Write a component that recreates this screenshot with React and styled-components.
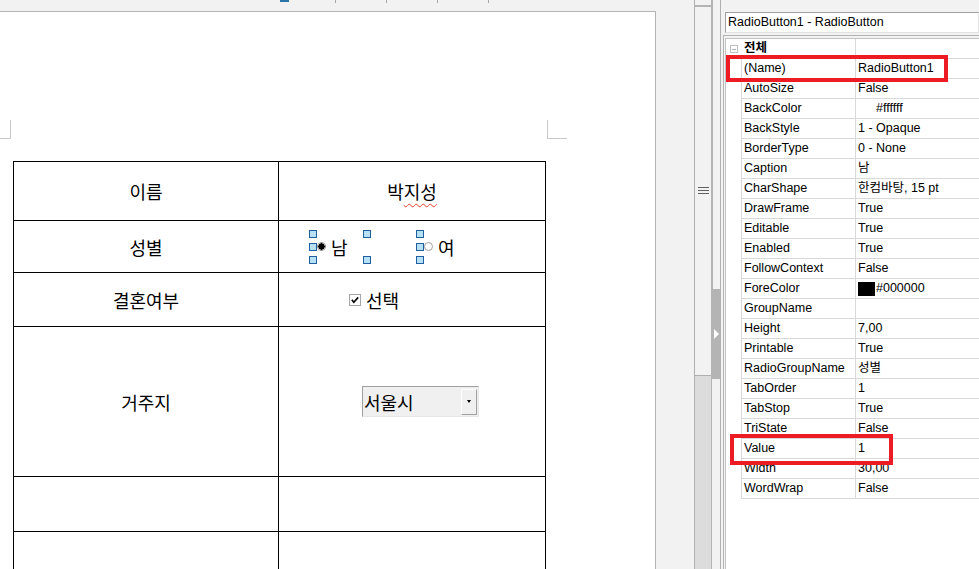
import styled, { createGlobalStyle } from 'styled-components';

const GlobalStyle = createGlobalStyle`
    html, body {
        margin: 0;
        padding: 0;
        overflow: hidden;
        background: #f2f2f2;
    }
    body {
        font-family: "Liberation Sans", "Noto Sans CJK KR", sans-serif;
    }
`;

const Screen = styled.div`
    display: flex;
    width: 979px;
    height: 569px;
    overflow: hidden;
`;

/* ---------- document side ---------- */

const DocArea = styled.div`
    width: 694px;
    flex-shrink: 0;
    display: flex;
    flex-direction: column;
    background: #f2f2f2;
    overflow: hidden;
`;

const Ruler = styled.div`
    height: 11px;
    flex-shrink: 0;
    display: flex;
    align-items: flex-start;
    padding-left: 280px;
`;

const RulerMark = styled.div`
    width: 9px;
    height: 2px;
    background: #2f76a8;
`;

const Ticks = styled.div`
    display: flex;
    gap: 50px;
    margin-left: 46px;
`;

const Tick = styled.div`
    width: 1px;
    height: 3px;
    background: #a8a8a8;
`;

const Page = styled.div`
    width: 655px;
    flex: 1;
    min-height: 0;
    overflow: hidden;
    background: #fff;
    border-top: 1px solid #b4b4b4;
    border-right: 1px solid #b4b4b4;
`;

const MarkRow = styled.div`
    display: flex;
    margin-top: 108px;
    height: 18px;
`;

const CornerMark = styled.div`
    width: ${p => p.$w}px;
    height: 18px;
    border-bottom: 1px solid #c8c8c8;
    ${p => p.$side === 'left'
        ? 'border-right: 1px solid #c8c8c8;'
        : 'border-left: 1px solid #c8c8c8; margin-left: 536px;'}
`;

const FormTable = styled.table`
    margin: 23px 0 0 13px;
    border-collapse: collapse;
    table-layout: fixed;
    width: 532px;
    font-family: "Noto Sans CJK KR", sans-serif;
    font-size: 18px;
    color: #000;
`;

const Row = styled.tr`
    height: ${p => p.$h}px;
`;

const Cell = styled.td`
    border: 1px solid #000;
    padding: 0 0 0 ${p => p.$indent || 0}px;
    text-align: ${p => (p.$indent ? 'left' : 'center')};
    vertical-align: middle;
    line-height: 20px;
`;

const Misspelled = styled.span`
    text-decoration: underline wavy #e0402a;
    text-decoration-thickness: 1px;
    text-underline-offset: 4px;
`;

const InlineRow = styled.div`
    display: flex;
    align-items: center;
`;

const RadioItem = styled.div`
    position: relative;
    width: 107px;
    height: 26px;
    display: flex;
    align-items: center;
    gap: 5px;
    padding-left: 4px;
    box-sizing: border-box;
`;

const RadioDot = styled.span`
    width: 9px;
    height: 9px;
    box-sizing: border-box;
    border-radius: 50%;
    border: 1px solid #a0a0a0;
    background: ${p => (p.$on ? 'radial-gradient(circle, #000 0 3px, #fff 3.5px)' : '#fff')};
    flex-shrink: 0;
`;

const Handle = styled.span`
    position: absolute;
    width: 8px;
    height: 8px;
    box-sizing: border-box;
    background: #b6e0f6;
    border: 1px solid #1f5f9e;
    z-index: 2;
    left: ${p => p.$x};
    top: ${p => p.$y};
    transform: translate(-50%, -50%);
`;

const CheckLabel = styled.div`
    display: flex;
    align-items: center;
    gap: 5px;
`;

const ComboBox = styled.div`
    width: 117px;
    height: 31px;
    box-sizing: border-box;
    display: flex;
    align-items: center;
    justify-content: space-between;
    background: #f0f0f0;
    border: 1px solid;
    border-color: #a0a0a0 #e6e6e6 #e6e6e6 #a0a0a0;
    padding-left: 1px;
`;

const DropButton = styled.div`
    width: 16px;
    height: 26px;
    box-sizing: border-box;
    margin-right: 1px;
    display: flex;
    align-items: center;
    justify-content: center;
    background: #f0f0f0;
    border: 1px solid;
    border-color: #fff #a0a0a0 #a0a0a0 #fff;
`;

const DownArrow = styled.span`
    width: 0;
    height: 0;
    border-left: 2.5px solid transparent;
    border-right: 2.5px solid transparent;
    border-top: 3px solid #000;
`;

/* ---------- splitter ---------- */

const Splitter = styled.div`
    width: 27px;
    flex-shrink: 0;
    display: flex;
    border-left: 1px solid #b0b0b0;
    border-right: 1px solid #b0b0b0;
    box-sizing: border-box;
`;

const SplitPane = styled.div`
    width: 16px;
    display: flex;
    flex-direction: column;
`;

const PaneTop = styled.div`
    height: 370px;
    background: #f2f2f2;
    border-top: 2px solid #b4b4b4;
    margin-top: 5px;
    display: flex;
    justify-content: center;
    padding-top: 180px;
    box-sizing: border-box;
`;

const PaneBottom = styled.div`
    flex: 1;
    background: #dcdcdc;
    border-top: 1px solid #b0b0b0;
`;

const SplitRail = styled.div`
    width: 9px;
    display: flex;
    flex-direction: column;
`;

const RailPart = styled.div`
    height: ${p => (p.$h ? `${p.$h}px` : 'auto')};
    flex: ${p => (p.$h ? 'none' : 1)};
    background: #f2f2f2;
    border-left: ${p => p.$edge}px solid #b4b4b4;
`;

const RailGrip = styled.div`
    height: 90px;
    background: #b4b4b4;
    display: flex;
    align-items: center;
    justify-content: center;
`;

const RightArrow = styled.span`
    width: 0;
    height: 0;
    border-top: 5px solid transparent;
    border-bottom: 5px solid transparent;
    border-left: 5px solid #fff;
    margin-left: 2px;
`;

/* ---------- property inspector ---------- */

const Inspector = styled.div`
    flex: 1;
    background: #f2f2f2;
    display: flex;
    flex-direction: column;
    padding-top: 12px;
    min-width: 0;
`;

const ObjectBox = styled.div`
    margin-left: 4px;
    height: 21px;
    flex-shrink: 0;
    box-sizing: border-box;
    border: 1px solid;
    border-color: #a0a0a0 #e3e3e3 #e3e3e3 #a0a0a0;
    background: #fff;
    font-size: 12.5px;
    line-height: 19px;
    padding-left: 2px;
    white-space: nowrap;
`;

const GridFrame = styled.div`
    margin: 2px 0 0 2px;
    flex: 1;
    border: 1px solid #b4b4b4;
    border-right: none;
    border-bottom: none;
    padding: 2px 0 0 1px;
`;

const Grid = styled.div`
    position: relative;
    height: 100%;
    background: #fff;
    border-top: 1px solid #c4c4c4;
    border-left: 1px solid #c4c4c4;
    box-sizing: border-box;
`;

const PropRow = styled.div`
    display: grid;
    grid-template-columns: 15px 115px 1fr;
    height: 20px;
    font-size: 12.5px;
    line-height: 19px;
`;

const Indent = styled.div`
    display: flex;
    align-items: center;
    justify-content: center;
`;

const Collapse = styled.span`
    width: 8px;
    height: 8px;
    box-sizing: border-box;
    border: 1px solid #c0c0c0;
    display: flex;
    align-items: center;
    justify-content: center;
    &::after {
        content: '';
        width: 4px;
        height: 1px;
        background: #b0b0b0;
    }
`;

const NameCell = styled.div`
    border-left: ${p => (p.$header ? 'none' : '1px solid #d9d9d9')};
    border-right: 1px solid #d9d9d9;
    border-bottom: 1px solid #d9d9d9;
    padding-left: ${p => (p.$header ? 3 : 2)}px;
    font-weight: ${p => (p.$header ? 700 : 400)};
    white-space: nowrap;
    overflow: hidden;
`;

const ValueCell = styled.div`
    border-bottom: 1px solid #d9d9d9;
    padding-left: 2px;
    display: flex;
    align-items: center;
    white-space: nowrap;
    overflow: hidden;
`;

const Swatch = styled.span`
    width: 17px;
    height: 14px;
    margin-right: 1px;
    background: ${p => p.$color};
    flex-shrink: 0;
`;

const Highlight = styled.div`
    position: absolute;
    left: ${p => p.$x}px;
    top: ${p => p.$y}px;
    width: ${p => p.$w}px;
    height: ${p => p.$h}px;
    box-sizing: border-box;
    border: 4px solid #ed1c24;
    pointer-events: none;
`;

const properties = [
    ['(Name)', 'RadioButton1'],
    ['AutoSize', 'False'],
    ['BackColor', '#ffffff', '#ffffff'],
    ['BackStyle', '1 - Opaque'],
    ['BorderType', '0 - None'],
    ['Caption', '남'],
    ['CharShape', '한컴바탕, 15 pt'],
    ['DrawFrame', 'True'],
    ['Editable', 'True'],
    ['Enabled', 'True'],
    ['FollowContext', 'False'],
    ['ForeColor', '#000000', '#000000'],
    ['GroupName', ''],
    ['Height', '7,00'],
    ['Printable', 'True'],
    ['RadioGroupName', '성별'],
    ['TabOrder', '1'],
    ['TabStop', 'True'],
    ['TriState', 'False'],
    ['Value', '1'],
    ['Width', '30,00'],
    ['WordWrap', 'False'],
];

const handles = [
    ['0%', '0%'], ['0%', '50%'], ['0%', '100%'],
    ['50%', '0%'], ['50%', '100%'],
    ['100%', '0%'], ['100%', '50%'], ['100%', '100%'],
];

const CheckIcon = () => (
    <svg width="12" height="12" viewBox="0 0 12 12">
        <rect x="0.5" y="0.5" width="11" height="11" fill="#fff" stroke="#a5a5a5" />
        <path d="M2.8 5.8 L4.8 8.2 L9.2 3.4" fill="none" stroke="#000" strokeWidth="1.6" />
    </svg>
);

const MenuGrip = () => (
    <svg width="11" height="7" viewBox="0 0 11 7">
        <path d="M0 0.5 H11 M0 3.5 H11 M0 6.5 H11" stroke="#606060" strokeWidth="1" />
    </svg>
);

const App = () => {
    return (
        <Screen>
            <GlobalStyle />
            <DocArea>
                <Ruler>
                    <RulerMark />
                    <Ticks>
                        <Tick /><Tick /><Tick /><Tick />
                    </Ticks>
                </Ruler>
                <Page>
                    <MarkRow>
                        <CornerMark $side="left" $w={10} />
                        <CornerMark $side="right" $w={19} />
                    </MarkRow>
                    <FormTable>
                        <colgroup>
                            <col style={{ width: 265 }} />
                            <col style={{ width: 267 }} />
                        </colgroup>
                        <tbody>
                            <Row $h={59}>
                                <Cell>이름</Cell>
                                <Cell>박<Misspelled>지성</Misspelled></Cell>
                            </Row>
                            <Row $h={52}>
                                <Cell>성별</Cell>
                                <Cell $indent={34}>
                                    <InlineRow>
                                        <RadioItem>
                                            <RadioDot $on />
                                            남
                                            {handles.map(([x, y]) => (
                                                <Handle key={x + y} $x={x} $y={y} />
                                            ))}
                                        </RadioItem>
                                        <RadioItem>
                                            <RadioDot />
                                            여
                                        </RadioItem>
                                    </InlineRow>
                                </Cell>
                            </Row>
                            <Row $h={54}>
                                <Cell>결혼여부</Cell>
                                <Cell $indent={70}>
                                    <CheckLabel>
                                        <CheckIcon />
                                        선택
                                    </CheckLabel>
                                </Cell>
                            </Row>
                            <Row $h={150}>
                                <Cell>거주지</Cell>
                                <Cell $indent={83}>
                                    <ComboBox>
                                        서울시
                                        <DropButton><DownArrow /></DropButton>
                                    </ComboBox>
                                </Cell>
                            </Row>
                            <Row $h={55}>
                                <Cell />
                                <Cell />
                            </Row>
                            <Row $h={60}>
                                <Cell />
                                <Cell />
                            </Row>
                        </tbody>
                    </FormTable>
                </Page>
            </DocArea>

            <Splitter>
                <SplitPane>
                    <PaneTop><MenuGrip /></PaneTop>
                    <PaneBottom />
                </SplitPane>
                <SplitRail>
                    <RailPart $h={289} $edge={2} />
                    <RailGrip><RightArrow /></RailGrip>
                    <RailPart $edge={1} />
                </SplitRail>
            </Splitter>

            <Inspector>
                <ObjectBox>RadioButton1 - RadioButton</ObjectBox>
                <GridFrame>
                    <Grid>
                        <PropRow>
                            <Indent><Collapse /></Indent>
                            <NameCell $header>전체</NameCell>
                            <ValueCell />
                        </PropRow>
                        {properties.map(([name, value, swatch]) => (
                            <PropRow key={name}>
                                <Indent />
                                <NameCell>{name}</NameCell>
                                <ValueCell>
                                    {swatch && <Swatch $color={swatch} />}
                                    {value}
                                </ValueCell>
                            </PropRow>
                        ))}
                        <Highlight $x={0} $y={16} $w={222} $h={27} />
                        <Highlight $x={4} $y={395} $w={163} $h={31} />
                    </Grid>
                </GridFrame>
            </Inspector>
        </Screen>
    );
};

export default App;
